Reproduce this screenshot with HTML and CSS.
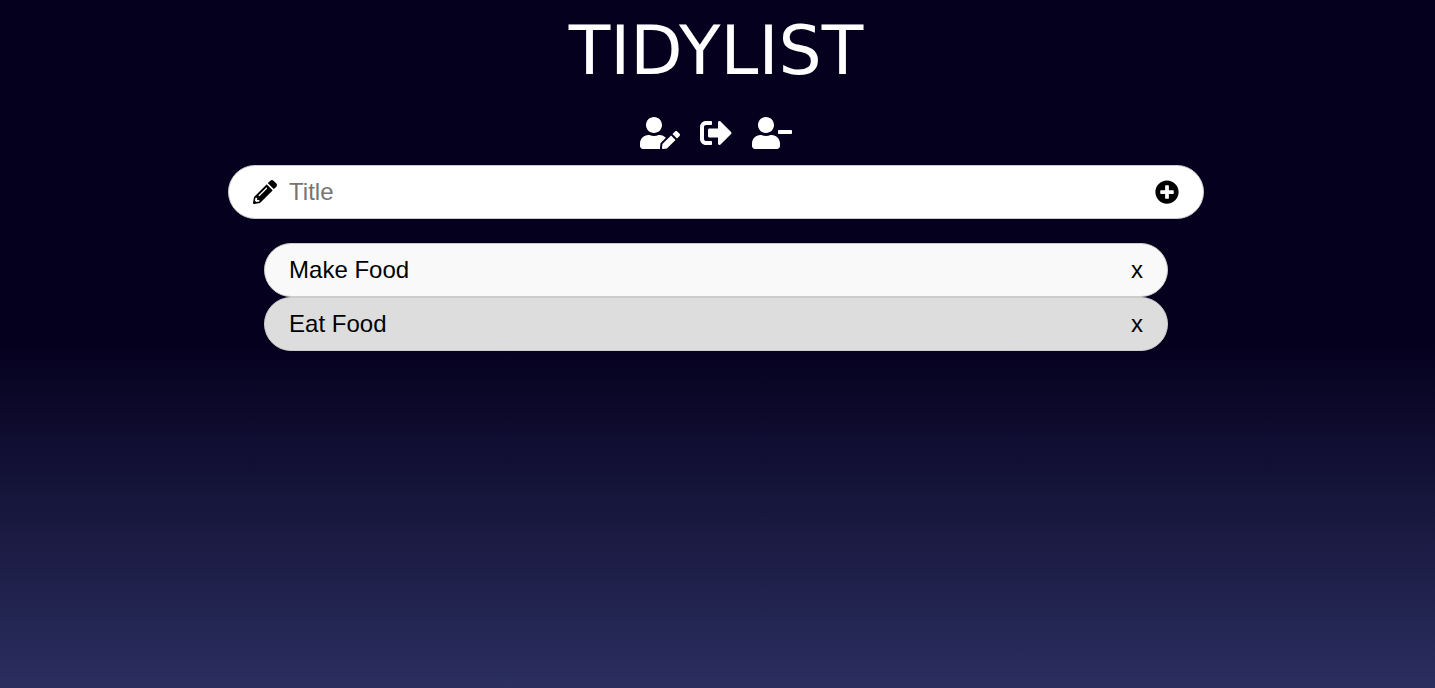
FILE: index.html
```html
<!DOCTYPE html>
<html lang="en">
<head>
<meta charset="utf-8">
<meta name="viewport" content="width=device-width, initial-scale=1">
<title>TidyList</title>
<link rel="stylesheet" href="styles.css">
</head>
<body>
<header class="header">
  <h1 class="brand">TIDYLIST</h1>
  <nav class="account" aria-label="Account">
    <button class="icon-button" type="button" aria-label="Edit account">
      <svg class="icon icon-wide" viewBox="0 0 640 512" aria-hidden="true"><path d="M224 256c70.700 0 128-57.300 128-128S294.700 0 224 0 96 57.300 96 128s57.300 128 128 128zm89.600 32h-16.700c-22.200 10.200-46.900 16-72.900 16s-50.600-5.800-72.900-16h-16.700C60.200 288 0 348.200 0 422.400V464c0 26.500 21.500 48 48 48h274.900c-2.400-6.800-3.400-14-2.600-21.300l6.800-60.900 1.200-11.100 7.900-7.900 77.300-77.300c-24.500-27.700-60-45.500-99.900-45.500zm45.300 145.300l-6.800 61c-1.100 10.200 7.500 18.800 17.600 17.600l60.900-6.800 137.900-137.900-71.700-71.700-137.900 137.800zM633 268.900L595.100 231c-9.300-9.300-24.500-9.300-33.800 0l-37.800 37.800-4.100 4.100 71.800 71.700 41.800-41.800c9.300-9.400 9.300-24.500 0-33.900z"/></svg>
    </button>
    <button class="icon-button" type="button" aria-label="Sign out">
      <svg class="icon" viewBox="0 0 512 512" aria-hidden="true"><path d="M497 273L329 441c-15 15-41 4.500-41-17v-96H152c-13.300 0-24-10.700-24-24v-96c0-13.300 10.700-24 24-24h136V88c0-21.400 25.900-32 41-17l168 168c9.300 9.400 9.300 24.600 0 34zM192 436v-40c0-6.600-5.400-12-12-12H96c-17.700 0-32-14.300-32-32V160c0-17.700 14.300-32 32-32h84c6.600 0 12-5.400 12-12V76c0-6.600-5.400-12-12-12H96c-53 0-96 43-96 96v192c0 53 43 96 96 96h84c6.600 0 12-5.400 12-12z"/></svg>
    </button>
    <button class="icon-button" type="button" aria-label="Delete account">
      <svg class="icon icon-wide" viewBox="0 0 640 512" aria-hidden="true"><path d="M624 208H432c-8.800 0-16 7.200-16 16v32c0 8.800 7.200 16 16 16h192c8.800 0 16-7.200 16-16v-32c0-8.800-7.200-16-16-16zm-400 48c70.700 0 128-57.300 128-128S294.700 0 224 0 96 57.300 96 128s57.300 128 128 128zm89.600 32h-16.700c-22.200 10.200-46.900 16-72.900 16s-50.600-5.800-72.900-16h-16.700C60.200 288 0 348.200 0 422.400V464c0 26.500 21.500 48 48 48h352c26.500 0 48-21.500 48-48v-41.600c0-74.200-60.200-134.400-134.400-134.400z"/></svg>
    </button>
  </nav>
</header>
<main class="content">
  <form class="bar entry">
    <label class="entry-label" for="title" aria-label="Title">
      <svg class="icon" viewBox="0 0 512 512" aria-hidden="true"><path d="M497.900 142.100l-46.100 46.100c-4.700 4.700-12.300 4.700-17 0l-111-111c-4.700-4.700-4.700-12.300 0-17l46.100-46.100c18.700-18.700 49.100-18.700 67.900 0l60.100 60.100c18.800 18.700 18.800 49.100 0 67.900zM284.200 99.800L21.600 362.400.4 483.900c-2.900 16.400 11.400 30.600 27.800 27.800l121.500-21.300 262.600-262.600c4.700-4.700 4.700-12.300 0-17l-111-111c-4.800-4.700-12.400-4.700-17.100 0zM124.100 339.900c-5.500-5.500-5.500-14.300 0-19.800l154-154c5.500-5.500 14.300-5.500 19.800 0s5.500 14.300 0 19.800l-154 154c-5.500 5.500-14.300 5.500-19.800 0zM88 424h48v36.300l-64.500 11.300-31.100-31.100L51.700 376H88v48z"/></svg>
    </label>
    <input class="entry-input" id="title" type="text" placeholder="Title" autocomplete="off">
    <button class="icon-button" type="submit" aria-label="Add item">
      <svg class="icon" viewBox="0 0 512 512" aria-hidden="true"><path d="M256 8C119 8 8 119 8 256s111 248 248 248 248-111 248-248S393 8 256 8zm144 276c0 6.600-5.400 12-12 12h-92v92c0 6.600-5.400 12-12 12h-56c-6.600 0-12-5.400-12-12v-92h-92c-6.600 0-12-5.400-12-12v-56c0-6.600 5.400-12 12-12h92v-92c0-6.600 5.400-12 12-12h56c6.600 0 12 5.400 12 12v92h92c6.600 0 12 5.400 12 12v56z"/></svg>
    </button>
  </form>
  <ul class="list">
    <li class="bar item"><span>Make Food</span><button class="remove" type="button" aria-label="Remove Make Food">x</button></li>
    <li class="bar item"><span>Eat Food</span><button class="remove" type="button" aria-label="Remove Eat Food">x</button></li>
  </ul>
</main>
</body>
</html>
```
FILE: styles.css
```css
* {
  box-sizing: border-box;
}

body {
  min-height: 100vh;
  margin: 0;
  padding-right: 3px;
  background: linear-gradient(#05001e 50%, #2b2f5f);
  color: #000;
  font: 24px/28px Helvetica, "Liberation Sans", Arial, sans-serif;
}

button,
input {
  padding: 0;
  border: 0;
  background: none;
  color: inherit;
  font: inherit;
}

button {
  cursor: pointer;
}

.header {
  display: flex;
  flex-direction: column;
  align-items: center;
  color: #fff;
}

.brand {
  margin: 0;
  padding: 11px 0 26px;
  font: 400 68px/80px Papyrus, "DejaVu Sans", sans-serif;
}

.account {
  display: flex;
  gap: 20px;
  font-size: 32px;
}

.icon-button,
.entry-label {
  display: flex;
}

.icon {
  width: 1em;
  height: 1em;
  fill: currentColor;
}

.icon-wide {
  width: 40px;
}

.content {
  width: 68vw;
  margin: 0 auto;
  padding-top: 16px;
}

.bar {
  display: flex;
  align-items: center;
  min-height: 54px;
  padding: 12px 24px;
  border: 1px solid #ccc;
  border-radius: 27px;
}

.entry {
  margin-bottom: 24px;
  gap: 12px;
  background: #fff;
}

.entry-input {
  flex: 1;
  min-width: 0;
  outline: 0;
}

.entry-input::placeholder {
  color: #757575;
}

.list {
  margin: 0;
  padding: 0 36px;
  list-style: none;
}

.item {
  justify-content: space-between;
  background: #f9f9f9;
}

.item:nth-child(even) {
  background: #ddd;
}
```
